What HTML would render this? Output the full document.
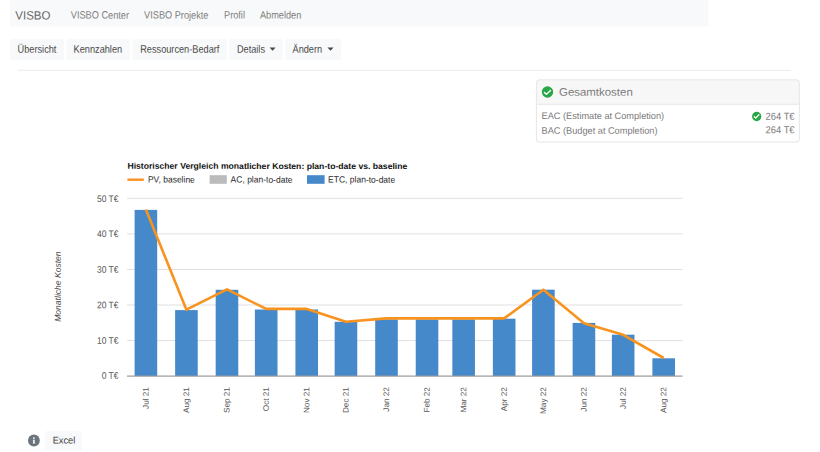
<!DOCTYPE html>
<html><head><meta charset="utf-8"><title>VISBO</title>
<style>
html,body{margin:0;padding:0;background:#fff;width:820px;height:452px;overflow:hidden;}
body{font-family:"Liberation Sans",sans-serif;position:relative;}
svg{position:absolute;left:0;top:0;display:block;}
</style></head><body>
<svg width="820" height="452" viewBox="0 0 820 452" font-family="Liberation Sans, sans-serif" text-rendering="geometricPrecision">
<rect x="10" y="0" width="698.4" height="26.7" fill="#f8f9fa"/>
<text transform="translate(15.3 19.4) rotate(0.04) scale(1 1.04)" font-size="11.5" fill="#686868">VISBO</text>
<text transform="translate(70.8 18.6) rotate(0.04) scale(1 1.15)" font-size="9.2" fill="#7d7d7d">VISBO Center</text>
<text transform="translate(144.1 18.6) rotate(0.04) scale(1 1.15)" font-size="9.2" fill="#7d7d7d">VISBO Projekte</text>
<text transform="translate(224 18.6) rotate(0.04) scale(1 1.15)" font-size="9.2" fill="#7d7d7d">Profil</text>
<text transform="translate(259.9 18.6) rotate(0.04) scale(1 1.15)" font-size="9.2" fill="#7d7d7d">Abmelden</text>
<rect x="10" y="38.9" width="53.90" height="21.4" rx="2" fill="#f8f9fa"/>
<rect x="66.3" y="38.9" width="63.60" height="21.4" rx="2" fill="#f8f9fa"/>
<rect x="132.6" y="38.9" width="94.30" height="21.4" rx="2" fill="#f8f9fa"/>
<rect x="229.2" y="38.9" width="53.40" height="21.4" rx="2" fill="#f8f9fa"/>
<rect x="285.3" y="38.9" width="55.60" height="21.4" rx="2" fill="#f8f9fa"/>
<text transform="translate(17.6 52.65) rotate(0.04) scale(1 1.18)" font-size="9.2" fill="#484848">Übersicht</text>
<text transform="translate(73.6 52.65) rotate(0.04) scale(1 1.18)" font-size="9.2" fill="#484848">Kennzahlen</text>
<text transform="translate(140.2 52.65) rotate(0.04) scale(1 1.18)" font-size="9.2" fill="#484848">Ressourcen-Bedarf</text>
<text transform="translate(236.9 52.65) rotate(0.04) scale(1 1.18)" font-size="9.2" fill="#484848">Details</text>
<text transform="translate(292.5 52.65) rotate(0.04) scale(1 1.18)" font-size="9.2" fill="#484848">Ändern</text>
<path d="M269.6 47.6 h6 l-3 3.2 z M327.5 47.6 h6 l-3 3.2 z" fill="#484848"/>
<rect x="18" y="69.8" width="773" height="1" fill="#ebebeb"/>
<clipPath id="cc"><rect x="536.4" y="79.8" width="263.00" height="62.20" rx="3"/></clipPath>
<g clip-path="url(#cc)"><rect x="536.4" y="79.8" width="263.00" height="24.50" fill="#f7f7f7"/><rect x="536.4" y="103.8" width="263.00" height="1" fill="#e6e6e6"/></g>
<rect x="536.4" y="79.8" width="263.00" height="62.20" rx="3" fill="none" stroke="#e6e6e6" stroke-width="1"/>
<g fill="#28a745"><circle cx="547.5" cy="92" r="5.7"/><circle cx="756.7" cy="116.5" r="4.65"/></g>
<g fill="none" stroke="#fff" stroke-width="1.6" stroke-linecap="round" stroke-linejoin="round"><path d="M544.4 92.5 L546.4 94.3 L550.5 90.5" stroke-width="1.45"/><path d="M754.3 116.7 L755.8 118.1 L758.9 114.8" stroke-width="1.35"/></g>
<text transform="translate(559 95.67) rotate(0.04) scale(1 0.96)" font-size="11.45" fill="#7b7b7b">Gesamtkosten</text>
<text transform="translate(541.6 119) rotate(0.04) scale(1 1.02)" font-size="9.2" fill="#7b7b7b">EAC (Estimate at Completion)</text>
<text transform="translate(541.6 133.65) rotate(0.04) scale(1 1.02)" font-size="9.2" fill="#7b7b7b">BAC (Budget at Completion)</text>
<text transform="translate(794.6 119.71) rotate(0.04) scale(1 1.08)" font-size="9.4" fill="#7b7b7b" text-anchor="end">264 T€</text>
<text transform="translate(794.6 133.3) rotate(0.04) scale(1 1.08)" font-size="9.4" fill="#7b7b7b" text-anchor="end">264 T€</text>
<text transform="translate(127.4 168.8) rotate(0.04) scale(1 0.97)" font-size="8.65" fill="#111" font-weight="bold">Historischer Vergleich monatlicher Kosten: plan-to-date vs. baseline</text>
<rect x="127.4" y="178.5" width="16.4" height="2.4" fill="#f7931e"/>
<text transform="translate(147.9 182.6) rotate(0.04) scale(1 1.06)" font-size="8.5" fill="#2a2a2a">PV, baseline</text>
<rect x="209.6" y="175.2" width="17.2" height="8.6" fill="#bbbbbb"/>
<text transform="translate(230.6 182.6) rotate(0.04) scale(1 1.06)" font-size="8.5" fill="#2a2a2a">AC, plan-to-date</text>
<rect x="307.0" y="175.2" width="17.6" height="8.6" fill="#4589ca"/>
<text transform="translate(328.1 182.6) rotate(0.04) scale(1 1.06)" font-size="8.5" fill="#2a2a2a">ETC, plan-to-date</text>
<g fill="#e0e0e0"><rect x="127" y="340.05" width="555.60" height="1"/><rect x="127" y="304.50" width="555.60" height="1"/><rect x="127" y="268.95" width="555.60" height="1"/><rect x="127" y="233.40" width="555.60" height="1"/><rect x="127" y="197.85" width="555.60" height="1"/></g>
<text transform="translate(118.5 378.85) rotate(0.04) scale(1 1.12)" font-size="8.5" fill="#555" text-anchor="end">0 T€</text>
<text transform="translate(118.5 343.75) rotate(0.04) scale(1 1.12)" font-size="8.5" fill="#555" text-anchor="end">10 T€</text>
<text transform="translate(118.5 308.32) rotate(0.04) scale(1 1.12)" font-size="8.5" fill="#555" text-anchor="end">20 T€</text>
<text transform="translate(118.5 272.83) rotate(0.04) scale(1 1.12)" font-size="8.5" fill="#555" text-anchor="end">30 T€</text>
<text transform="translate(118.5 237.0) rotate(0.04) scale(1 1.12)" font-size="8.5" fill="#555" text-anchor="end">40 T€</text>
<text transform="translate(118.5 202.0) rotate(0.04) scale(1 1.12)" font-size="8.5" fill="#555" text-anchor="end">50 T€</text>
<text transform="translate(60.7 286.6) rotate(-89.96) scale(1 1.0)" font-size="8.55" fill="#4a4a4a" text-anchor="middle" font-style="italic">Monatliche Kosten</text>
<g fill="#4589ca"><rect x="134.60" y="209.9" width="22.6" height="166.20"/><rect x="175.13" y="310.1" width="22.6" height="66.00"/><rect x="215.67" y="289.8" width="22.6" height="86.30"/><rect x="254.90" y="309.5" width="22.6" height="66.60"/><rect x="295.43" y="309.5" width="22.6" height="66.60"/><rect x="334.66" y="321.8" width="22.6" height="54.30"/><rect x="375.19" y="319.4" width="22.6" height="56.70"/><rect x="415.73" y="319.4" width="22.6" height="56.70"/><rect x="452.34" y="319.4" width="22.6" height="56.70"/><rect x="492.88" y="318.7" width="22.6" height="57.40"/><rect x="532.10" y="289.7" width="22.6" height="86.40"/><rect x="572.64" y="322.9" width="22.6" height="53.20"/><rect x="611.87" y="334.7" width="22.6" height="41.40"/><rect x="652.40" y="358.3" width="22.6" height="17.80"/></g>
<rect x="127" y="375.50" width="555.60" height="1.2" fill="#9a9a9a"/>
<polyline fill="none" stroke="#f7931e" stroke-width="2.6" stroke-linejoin="round" stroke-linecap="butt" points="145.90,209.5 186.43,309.7 226.97,289.4 266.20,308.9 306.73,308.9 345.96,321.7 386.49,318.4 427.03,318.4 463.64,318.4 504.18,318.4 543.40,289.7 583.94,323.3 623.17,334.8 663.70,358.0"/>
<text transform="translate(148.5 387.1) rotate(-89.96) scale(1 0.98)" font-size="8.2" fill="#555" text-anchor="end">Jul 21</text>
<text transform="translate(189.03 387.1) rotate(-89.96) scale(1 0.98)" font-size="8.2" fill="#555" text-anchor="end">Aug 21</text>
<text transform="translate(229.57 387.1) rotate(-89.96) scale(1 0.98)" font-size="8.2" fill="#555" text-anchor="end">Sep 21</text>
<text transform="translate(268.8 387.1) rotate(-89.96) scale(1 0.98)" font-size="8.2" fill="#555" text-anchor="end">Oct 21</text>
<text transform="translate(309.33 387.1) rotate(-89.96) scale(1 0.98)" font-size="8.2" fill="#555" text-anchor="end">Nov 21</text>
<text transform="translate(348.56 387.1) rotate(-89.96) scale(1 0.98)" font-size="8.2" fill="#555" text-anchor="end">Dec 21</text>
<text transform="translate(389.09 387.1) rotate(-89.96) scale(1 0.98)" font-size="8.2" fill="#555" text-anchor="end">Jan 22</text>
<text transform="translate(429.63 387.1) rotate(-89.96) scale(1 0.98)" font-size="8.2" fill="#555" text-anchor="end">Feb 22</text>
<text transform="translate(466.24 387.1) rotate(-89.96) scale(1 0.98)" font-size="8.2" fill="#555" text-anchor="end">Mar 22</text>
<text transform="translate(506.78 387.1) rotate(-89.96) scale(1 0.98)" font-size="8.2" fill="#555" text-anchor="end">Apr 22</text>
<text transform="translate(546.0 387.1) rotate(-89.96) scale(1 0.98)" font-size="8.2" fill="#555" text-anchor="end">May 22</text>
<text transform="translate(586.54 387.1) rotate(-89.96) scale(1 0.98)" font-size="8.2" fill="#555" text-anchor="end">Jun 22</text>
<text transform="translate(625.77 387.1) rotate(-89.96) scale(1 0.98)" font-size="8.2" fill="#555" text-anchor="end">Jul 22</text>
<text transform="translate(666.3 387.1) rotate(-89.96) scale(1 0.98)" font-size="8.2" fill="#555" text-anchor="end">Aug 22</text>
<circle cx="33.9" cy="440.5" r="5.9" fill="#6c757d"/><circle cx="33.95" cy="438.1" r="0.9" fill="#fff"/><path d="M32.9 439.7 h1.8 v3.1 h0.5 v0.8 h-2.5 v-0.8 h0.5 v-2.3 h-0.3 z" fill="#fff"/>
<rect x="44.8" y="430.9" width="37.2" height="19.5" rx="2" fill="#f8f9fa"/>
<text transform="translate(52.7 443.6) rotate(0.04) scale(1 1.05)" font-size="9.25" fill="#3c3c3c">Excel</text>
</svg>
</body></html>
